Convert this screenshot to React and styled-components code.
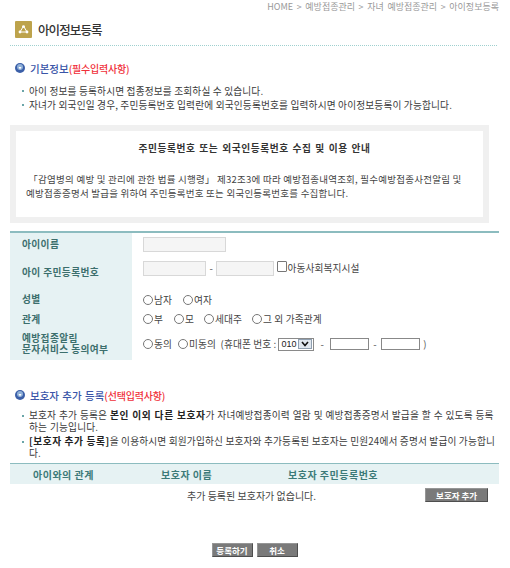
import React from "react";
import styled, { createGlobalStyle } from "styled-components";

const Global = createGlobalStyle`
  html, body { margin: 0; padding: 0; background: #fff; }
  body { font-family: "Noto Sans CJK KR", "Liberation Sans", sans-serif; font-size: 10px; color: #333; }
  * { box-sizing: border-box; }
`;

const Page = styled.div`
  width: 510px;
  height: 568px;
  overflow: hidden;
  padding: 0 11px 0 10px;
`;
const Breadcrumb = styled.div`
  height: 14px;
  line-height: 14px;
  text-align: right;
  font-size: 9px;
  word-spacing: 1.6px;
  color: #999;
`;
const TitleBar = styled.div`
  display: flex;
  align-items: center;
  gap: 6px;
  height: 32px;
  padding: 2px 0 0 5px;
  width: 487px;
  border-bottom: 1px dotted #9fd0cf;
`;
const TitleIcon = styled.span`
  width: 17px;
  height: 17px;
  margin-top: -2px;
  border-radius: 1px;
  background: #bda34c;
  display: flex;
  align-items: center;
  justify-content: center;
`;
const Title = styled.h1`
  margin: -3px 0 0;
  font-size: 12.5px;
  font-weight: 500;
  letter-spacing: -0.9px;
  color: #333;
`;
const SectionHeading = styled.h2`
  display: flex;
  align-items: center;
  gap: 5px;
  margin: ${(p) => p.$top}px 0 0 5px;
  height: 14px;
  font-size: 10.5px;
  font-weight: 500;
  word-spacing: 1px;
  color: #3a55a8;
  white-space: pre;
`;
const Required = styled.span`
  color: #f0303a;
  margin-left: -5px;
  font-size: 10px;
  letter-spacing: -0.2px;
`;
const BulletList = styled.ul`
  list-style: none;
  margin: ${(p) => p.$top}px 0 0;
  padding: 0 3px 0 19px;
`;
const Bullet = styled.li`
  position: relative;
  line-height: ${(p) => p.$lh || 14}px;
  font-size: 9.7px;
  letter-spacing: 0.15px;
  word-spacing: ${(p) => p.$ws || 0}px;
  color: #3a3a3a;
  margin-bottom: ${(p) => p.$gap || 0}px;
  &::before {
    content: "";
    position: absolute;
    left: -7px;
    top: 6px;
    width: 2px;
    height: 2px;
    background: #6aa5a8;
  }
`;
const Emphasis = styled.b`
  font-weight: 700;
  letter-spacing: 0.6px;
  color: #222;
`;
const NoticeBox = styled.section`
  width: 479px;
  height: 98px;
  margin-top: 13px;
  border: 6px solid #f0f0f0;
  padding: 0 10px;
`;
const NoticeTitle = styled.div`
  height: 34px;
  line-height: 34px;
  padding-left: 10px;
  text-align: center;
  font-weight: 700;
  font-size: 9.7px;
  letter-spacing: 0.6px;
  word-spacing: 1px;
  color: #333;
`;
const NoticeText = styled.p`
  margin: 7px 0 0;
  font-size: 9.5px;
  line-height: 14px;
  color: #444;
  white-space: nowrap;
  letter-spacing: 0.24px;
`;
const FormTable = styled.div`
  margin-top: 8px;
  border-top: 2px solid #8cbcbf;
`;
const Row = styled.div`
  display: grid;
  grid-template-columns: 122px 1fr;
  height: ${(p) => p.$h}px;
`;
const RowLabel = styled.div`
  background: #e6f2f3;
  padding-left: 12px;
  display: flex;
  align-items: center;
  font-size: 9.7px;
  font-weight: 700;
  letter-spacing: 0.4px;
  color: #3c6f6d;
  line-height: 11px;
`;
const RowField = styled.div`
  display: flex;
  align-items: ${(p) => (p.$top ? "flex-start" : "center")};
  padding: ${(p) => p.$pt || 0}px 0 0 11px;
  font-size: 9.7px;
  letter-spacing: 0.1px;
  color: #444;
  white-space: pre;
`;
const TextInput = styled.input`
  width: ${(p) => p.$w}px;
  height: ${(p) => p.$h || 15}px;
  margin: 0;
  padding: 0;
  background: ${(p) => p.$bg || "#f5f5f5"};
  border: 1px solid ${(p) => p.$bc || "#d8d8d8"};
  outline: none;
`;
const Dash = styled.span`
  margin: 0 ${(p) => p.$m || 4}px;
  color: #555;
`;
const Check = styled.input`
  appearance: none;
  width: 10px;
  height: 11px;
  margin: 0 0 0 3px;
  background: #fff;
  border: 1px solid #777;
  border-radius: 1px;
`;
const Radio = styled.input`
  appearance: none;
  width: 10px;
  height: 10px;
  margin: 0 1px 0 ${(p) => p.$ml || 0}px;
  background: #fff;
  border: 1px solid #777;
  border-radius: 50%;
`;
const SelectBox = styled.span`
  display: inline-flex;
  align-items: center;
  justify-content: space-between;
  width: 36px;
  height: 13px;
  margin-left: 2px;
  padding: 0 1px 0 2px;
  border: 1px solid #8a8a8a;
  font-family: "Liberation Sans", sans-serif;
  font-size: 9px;
  color: #222;
`;
const SelectArrow = styled.span`
  width: 14px;
  height: 10px;
  background: #dfe6ee;
  border: 1px solid #8f9fb0;
  display: flex;
  align-items: center;
  justify-content: center;
`;
const GuardianHead = styled.div`
  display: grid;
  grid-template-columns: 128px 127px 1fr;
  height: 21px;
  margin-top: 4px;
  padding-left: 23px;
  align-items: center;
  background: #e6f2f3;
  border-top: 1px solid #8cbcbf;
  font-size: 10px;
  font-weight: 700;
  letter-spacing: 0.5px;
  color: #3c7a78;
`;
const GuardianEmpty = styled.div`
  display: flex;
  align-items: center;
  height: 22px;
  padding-left: 177px;
  font-size: 10px;
  color: #444;
`;
const GrayButton = styled.button`
  width: ${(p) => p.$w}px;
  height: 14px;
  padding: 0;
  margin: 0 0 0 ${(p) => p.$ml || 0}px;
  background: #7a7a7a;
  border: 1px solid;
  border-color: #969696 #4e4e4e #4e4e4e #969696;
  color: #fff;
  font-family: inherit;
  font-size: 8.5px;
  font-weight: 700;
  line-height: 11px;
`;
const Actions = styled.div`
  display: flex;
  justify-content: center;
  gap: 4px;
  margin-top: 37px;
`;

const InfoIcon = () => (
  <svg width="10" height="10" viewBox="0 0 10 10">
    <circle cx="5" cy="5" r="5" fill="#3b5fa8" />
    <circle cx="5" cy="4" r="3" fill="#8fb0d8" />
    <path d="M3.5 4H6.5L5 6.5Z" fill="#fff" />
  </svg>
);

export default function App() {
  return (
    <Page>
      <Global />
      <Breadcrumb>HOME &gt; 예방접종관리 &gt; 자녀 예방접종관리 &gt; 아이정보등록</Breadcrumb>
      <TitleBar>
        <TitleIcon>
          <svg width="11" height="9" viewBox="0 0 11 9">
            <path d="M5.5 1L2 7M5.5 1L9 7M2 7H9" stroke="#fff" strokeWidth="1" fill="none" />
            <circle cx="5.5" cy="1.6" r="1.4" fill="#fff" />
            <circle cx="2" cy="7" r="1.4" fill="#fff" />
            <circle cx="9" cy="7" r="1.4" fill="#fff" />
          </svg>
        </TitleIcon>
        <Title>아이정보등록</Title>
      </TitleBar>

      <SectionHeading $top={15}>
        <InfoIcon />
        기본정보<Required>(필수입력사항)</Required>
      </SectionHeading>
      <BulletList $top={9}>
        <Bullet>아이 정보를 등록하시면 접종정보를 조회하실 수 있습니다.</Bullet>
        <Bullet>자녀가 외국인일 경우, 주민등록번호 입력란에 외국인등록번호를 입력하시면 아이정보등록이 가능합니다.</Bullet>
      </BulletList>

      <NoticeBox>
        <NoticeTitle>주민등록번호 또는 외국인등록번호 수집 및 이용 안내</NoticeTitle>
        <NoticeText>
          &nbsp;「감염병의 예방 및 관리에 관한 법률 시행령」 제32조3에 따라 예방접종내역조회, 필수예방접종사전알림 및
          <br />
          예방접종증명서 발급을 위하여 주민등록번호 또는 외국인등록번호를 수집합니다.
        </NoticeText>
      </NoticeBox>

      <FormTable>
        <Row $h={22}>
          <RowLabel>아이이름</RowLabel>
          <RowField $top $pt={4}>
            <TextInput $w={83} />
          </RowField>
        </Row>
        <Row $h={34}>
          <RowLabel>아이 주민등록번호</RowLabel>
          <RowField $top $pt={6}>
            <TextInput $w={63} />
            <Dash $m={3.5}>-</Dash>
            <TextInput $w={58} />
            <Check type="checkbox" />
            아동사회복지시설
          </RowField>
        </Row>
        <Row $h={21}>
          <RowLabel>성별</RowLabel>
          <RowField>
            <Radio type="radio" />남자
            <Radio type="radio" $ml={11} />여자
          </RowField>
        </Row>
        <Row $h={18}>
          <RowLabel>관계</RowLabel>
          <RowField>
            <Radio type="radio" />부
            <Radio type="radio" $ml={11} />모
            <Radio type="radio" $ml={10} />세대주
            <Radio type="radio" $ml={10} />그 외 가족관계
          </RowField>
        </Row>
        <Row $h={32}>
          <RowLabel>
            예방접종알림
            <br />
            문자서비스 동의여부
          </RowLabel>
          <RowField>
            <Radio type="radio" />동의
            <Radio type="radio" $ml={6} />미동의  (휴대폰 번호 : 
            <SelectBox>
              010
              <SelectArrow>
                <svg width="8" height="6" viewBox="0 0 8 6">
                  <path d="M1 1L4 4.5L7 1" stroke="#111" strokeWidth="1.6" fill="none" />
                </svg>
              </SelectArrow>
            </SelectBox>
            <Dash $m={6}>-</Dash>
            <TextInput $w={39} $h={12} $bg="#fff" $bc="#888" />
            <Dash $m={4.5}>-</Dash>
            <TextInput $w={39} $h={12} $bg="#fff" $bc="#888" />
            <Dash $m={3}>)</Dash>
          </RowField>
        </Row>
      </FormTable>

      <SectionHeading $top={28}>
        <InfoIcon />
        보호자 추가 등록<Required>(선택입력사항)</Required>
      </SectionHeading>
      <BulletList $top={7}>
        <Bullet $lh={12} $gap={2} $ws={0.5}>
          보호자 추가 등록은 <Emphasis>본인 이외 다른 보호자</Emphasis>가 자녀예방접종이력 열람 및 예방접종증명서 발급을 할 수 있도록 등록하는 기능입니다.
        </Bullet>
        <Bullet $lh={12}>
          <Emphasis>[보호자 추가 등록]</Emphasis>을 이용하시면 회원가입하신 보호자와 추가등록된 보호자는 민원24에서 증명서 발급이 가능합니다.
        </Bullet>
      </BulletList>

      <GuardianHead>
        <span>아이와의 관계</span>
        <span>보호자 이름</span>
        <span>보호자 주민등록번호</span>
      </GuardianHead>
      <GuardianEmpty>
        추가 등록된 보호자가 없습니다.
        <GrayButton $w={63} $ml={109}>보호자 추가</GrayButton>
      </GuardianEmpty>

      <Actions>
        <GrayButton $w={41}>등록하기</GrayButton>
        <GrayButton $w={41}>취소</GrayButton>
      </Actions>
    </Page>
  );
}
